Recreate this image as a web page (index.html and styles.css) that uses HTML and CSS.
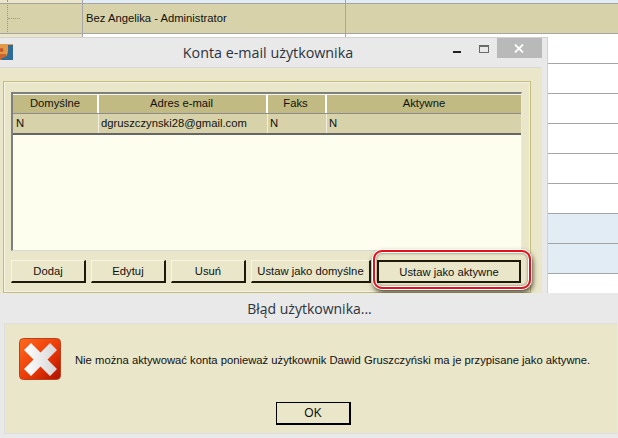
FILE: index.html
```html
<!DOCTYPE html>
<html lang="pl">
<head>
<meta charset="utf-8">
<title>Konta e-mail użytkownika</title>
<link rel="stylesheet" href="styles.css">
</head>
<body>
<div class="desktop">
  <div class="bg-table">
    <div class="bg-row bg-blue bg-first"><span class="bg-c1"></span><span class="bg-c2"></span><span class="bg-c3"></span></div>
    <div class="bg-row bg-tan"><span class="bg-c1"><i class="tree"></i></span><span class="bg-c2">Bez Angelika - Administrator</span><span class="bg-c3"></span></div>
    <div class="bg-row"><span class="bg-c1"></span><span class="bg-c2"></span><span class="bg-c3"></span></div>
    <div class="bg-row"></div>
    <div class="bg-row"></div>
    <div class="bg-row"></div>
    <div class="bg-row"></div>
    <div class="bg-row"></div>
    <div class="bg-row bg-blue"></div>
    <div class="bg-row bg-blue"></div>
  </div>

  <section class="window accounts">
    <header class="titlebar">
      <svg class="app-icon" width="13" height="16" viewBox="0 0 13 16">
        <rect width="13" height="16" fill="#e29a48"/>
        <path d="M0 10h6v6H0z" fill="#c9652e"/>
        <path d="M8 1h5v15H2q-1-1 0-2q7 0 6-12z" fill="#2e6c96"/>
        <circle cx="1.5" cy="6" r="2" fill="#c8572c"/>
      </svg>
      <h1 class="title">Konta e-mail użytkownika</h1>
      <div class="controls">
        <span class="ctl-min"></span>
        <span class="ctl-max"></span>
        <span class="ctl-close">
          <svg width="10" height="9" viewBox="0 0 10 9"><path d="M1 .5l8 8M9 .5l-8 8" stroke="#fff" stroke-width="1.8" fill="none"/></svg>
        </span>
      </div>
    </header>
    <div class="client">
      <div class="panel">
        <div class="grid">
          <div class="grid-row grid-head">
            <div class="cell c-a">Domyślne</div>
            <div class="cell c-b">Adres e-mail</div>
            <div class="cell c-c">Faks</div>
            <div class="cell c-d">Aktywne</div>
          </div>
          <div class="grid-row grid-data">
            <div class="cell c-a">N</div>
            <div class="cell c-b">dgruszczynski28@gmail.com</div>
            <div class="cell c-c">N</div>
            <div class="cell c-d">N</div>
          </div>
        </div>
        <div class="buttons">
          <button class="btn btn-s">Dodaj</button>
          <button class="btn btn-s">Edytuj</button>
          <button class="btn btn-s">Usuń</button>
          <button class="btn btn-m">Ustaw jako domyślne</button>
          <button class="btn btn-l">Ustaw jako aktywne</button>
        </div>
      </div>
    </div>
  </section>

  <div class="highlight"></div>

  <section class="window error">
    <h2 class="err-title">Błąd użytkownika...</h2>
    <div class="err-body">
      <div class="err-msg">
        <svg class="err-icon" width="43" height="43" viewBox="0 0 43 43">
          <defs>
            <linearGradient id="red" x1="0" y1="0" x2="1" y2="1">
              <stop offset="0" stop-color="#ff6a20"/>
              <stop offset=".55" stop-color="#ec3a06"/>
              <stop offset="1" stop-color="#ac0e00"/>
            </linearGradient>
            <linearGradient id="white" x1="0" y1="0" x2="1" y2="0">
              <stop offset="0" stop-color="#ffffff"/>
              <stop offset="1" stop-color="#d6d6d6"/>
            </linearGradient>
          </defs>
          <rect x=".5" y=".5" width="41" height="41" rx="4" fill="url(#red)" stroke="#b8421c"/>
          <path d="M5 12l7-7 9.500 9.500 9.500-9.500 7 7-9.500 9.500 9.500 9.500-7 7-9.500-9.500-9.500 9.500-7-7 9.500-9.500z" fill="url(#white)"/>
        </svg>
        <p class="err-text">Nie można aktywować konta ponieważ użytkownik Dawid Gruszczyński ma je przypisane jako aktywne.</p>
      </div>
      <button class="btn-ok">OK</button>
    </div>
  </section>
</div>
</body>
</html>
```
FILE: styles.css
```css
* { box-sizing: border-box; margin: 0; padding: 0; }
html, body { width: 618px; height: 438px; overflow: hidden; background: #fff; }
body { font-family: "Liberation Sans", Arial, sans-serif; font-size: 11.25px; color: #111; }
.desktop { position: relative; width: 618px; height: 438px; overflow: hidden; }

/* background table */
.bg-table { display: flex; flex-direction: column; }
.bg-row { display: flex; height: 30px; border-bottom: 1px solid #a5a5a5; flex: none; }
.bg-first { height: 4px; }
.bg-blue { background: #e2ecf4; }
.bg-tan { background: #d7d2a9; }
.bg-c1 { width: 83px; background: #ebe6c9; border-right: 1px solid #a5a5a5; position: relative; }
.bg-tan .bg-c1 { background: #d7d2a9; }
.bg-c2 { width: 263px; border-right: 1px solid #a5a5a5; line-height: 28px; padding-left: 3px; }
.tree { position: absolute; left: 7px; top: -4px; bottom: -1px; width: 13px; border-left: 1px dotted #999; }
.tree::after { content: ""; position: absolute; left: 0; top: 18px; width: 12px; border-top: 1px dotted #999; }

/* windows */
.window { position: absolute; background: #e9e9e9; }
.accounts { left: 0; top: 37px; width: 548px; height: 256px; border: 1px solid #d2d2d2; border-left: 0; border-bottom: 0; display: flex; flex-direction: column; }
.titlebar { height: 29px; flex: none; position: relative; display: flex; justify-content: center; }
.app-icon { position: absolute; left: 0; top: 6px; }
.title { font: 400 14.3px/29px "Open Sans", sans-serif; color: #2c3440; margin-right: 11px; }
.controls { position: absolute; right: 5px; top: 0; display: flex; align-items: flex-start; }
.ctl-min { width: 8px; height: 2px; background: #222; margin-top: 13px; margin-right: 18px; }
.ctl-max { width: 10px; height: 8px; border: 1px solid #6a6a6a; border-top-width: 2px; margin-top: 7px; margin-right: 8px; }
.ctl-close { width: 45px; height: 20px; background: #b9b9b9; display: flex; align-items: center; justify-content: center; padding-right: 1px; }

.client { flex: 1; margin-right: 5px; background: #eae6c9; border-top: 1px solid #d8d8d8; padding: 13px 11px 0 3px; display: flex; min-height: 0; }
.panel { flex: 1; border: 1px solid #c4bb7e; border-bottom-width: 2px; border-right-width: 1px; padding: 10px 7px 0 7px; outline: 1px solid #f5f2e0; outline-offset: -2px; }

.grid { height: 159px; width: 511px; background: #fefeee; border: 2px solid #7f7f7f; border-right: 1px solid #e8e8e8; border-bottom: 1px solid #d8d8d8; }
.grid-row { display: flex; }
.grid-head { height: 20px; background: #c1bb83; border-top: 1px solid #f7f7f0; border-bottom: 1px solid #8d8d8d; text-align: center; }
.grid-data { height: 21px; background: #d7d2a9; border-bottom: 2px solid #666; }
.cell { line-height: 17px; border-right: 1px solid #fff; flex: none; white-space: nowrap; }
.grid-head .cell { border-right-width: 2px; }
.grid-head .c-b, .grid-head .c-c { padding-right: 2px; }
.grid-data .cell { line-height: 18px; padding-left: 2px; border-right-color: #f1efdc; }
.grid-data .c-a { padding-left: 3px; }
.c-a { width: 86px; }
.c-b { width: 169px; }
.c-c { width: 59px; }
.c-d { flex: 1; width: 194px; border-right: 0 !important; }

.buttons { display: flex; margin-top: 9px; gap: 5px; }
.btn { height: 23px; background: #eae6c9; border: 1px solid #f7f4e2; border-right: 2px solid #1e1a0a; border-bottom: 2px solid #1e1a0a; font: inherit; color: #111; flex: none; padding: 0; }
.btn-s { width: 75px; }
.btn-m { width: 120px; }
.btn-l { width: 144px; margin-left: 1px; border: 2px solid #1e1a0a; }

.highlight { position: absolute; left: 373px; top: 250px; width: 158px; height: 39px; border: 2px solid #e6101c; border-radius: 9px; box-shadow: 0 0 0 1px #fff, 1px 3px 5px 1px rgba(50,46,25,.8), inset 0 0 0 1px #fff, inset 0 0 3px 1px rgba(40,40,20,.6); }

.error { left: 0; top: 293px; width: 618px; height: 145px; display: flex; flex-direction: column; }
.err-title { font: 400 14px/32px "Open Sans", sans-serif; color: #2c3440; text-align: center; height: 30px; flex: none; margin-left: 1px; }
.err-body { margin-left: 4px; width: 613px; height: 111px; background: #eae6c9; border: 1px solid #dedede; border-right: 0; display: flex; flex-direction: column; align-items: center; }
.err-msg { display: flex; align-items: center; width: 100%; height: 72px; padding-left: 14px; gap: 13px; }
.err-icon { flex: none; margin-top: -2px; }
.err-text { white-space: nowrap; }
.btn-ok { width: 75px; height: 23px; margin-left: 5px; margin-top: 6px; background: #eae6c9; border: 1px solid #000; border-width: 1px 2px 2px 1px; font: inherit; font-size: 12px; color: #111; }
```
